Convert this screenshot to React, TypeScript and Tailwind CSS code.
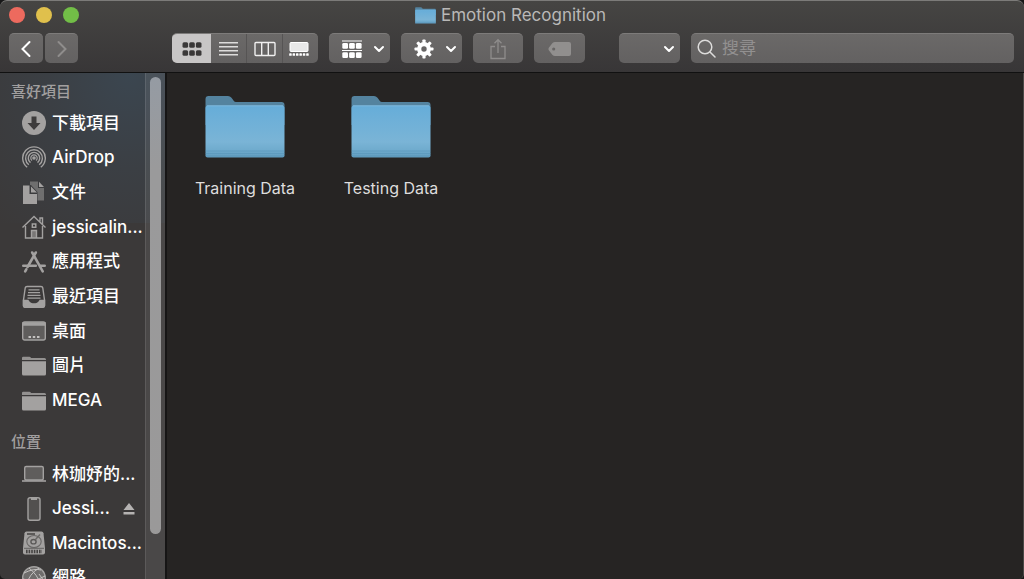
import type { ReactNode } from "react";

const BUTTON =
  "flex h-[30px] items-center rounded-[5px] border-t border-[#7d7b7a] bg-linear-to-b from-[#6b6968] to-[#636161] text-white";

function Chevron() {
  return (
    <svg width="12" height="8" viewBox="0 0 12 8" fill="none" stroke="currentColor" strokeWidth="2" strokeLinecap="round" strokeLinejoin="round">
      <path d="M2 2l4 4 4-4" />
    </svg>
  );
}

function GridIcon() {
  return (
    <svg width="20" height="16" viewBox="0 0 20 16" fill="currentColor">
      {[0.5, 7.2, 13.9].map((x) => (
        <g key={x}>
          <rect x={x} y="1.2" width="5.600" height="5.600" rx="1.500" />
          <rect x={x} y="9.2" width="5.600" height="5.600" rx="1.500" />
        </g>
      ))}
    </svg>
  );
}

function ListIcon() {
  return (
    <svg width="19" height="16" viewBox="0 0 19 16" stroke="currentColor" strokeWidth="1.4">
      <path d="M0 1.700h19M0 5.700h19M0 9.700h19M0 13.700h19" />
    </svg>
  );
}

function ColumnsIcon() {
  return (
    <svg width="22" height="16" viewBox="0 0 22 16" fill="none" stroke="currentColor" strokeWidth="1.4">
      <rect x="1" y="1.500" width="20" height="13" rx="1" />
      <path d="M7.700 2v12M14.300 2v12" />
    </svg>
  );
}

function GalleryIcon() {
  return (
    <svg width="20" height="16" viewBox="0 0 20 16" fill="currentColor">
      <rect x="1" y="1.500" width="18" height="9" rx="1" fillOpacity=".85" stroke="currentColor" strokeWidth="1" />
      {[0, 3.4, 6.8, 10.2, 13.6, 17].map((x) => (
        <rect key={x} x={x + 0.2} y="12.300" width="2.500" height="2.500" rx=".6" />
      ))}
    </svg>
  );
}

function ArrangeIcon() {
  return (
    <svg width="20" height="20" viewBox="0 0 20 20" fill="currentColor">
      <path d="M0 1.500h20v1H0zM0 11h20v1H0z" />
      {[0.3, 7.1, 13.9].map((x) => (
        <g key={x}>
          <rect x={x} y="4" width="5.700" height="5.700" rx="1.300" />
          <rect x={x} y="13.300" width="5.700" height="5.700" rx="1.300" />
        </g>
      ))}
    </svg>
  );
}

function GearIcon() {
  return (
    <svg width="20" height="20" viewBox="0 0 20 20">
      <circle cx="10" cy="10" r="4.800" fill="none" stroke="currentColor" strokeWidth="4.200" />
      {[0, 45, 90, 135, 180, 225, 270, 315].map((a) => (
        <rect key={a} x="8.400" y=".5" width="3.200" height="4" rx=".8" fill="currentColor" transform={`rotate(${a} 10 10)`} />
      ))}
    </svg>
  );
}

function ShareIcon() {
  return (
    <svg width="18" height="22" viewBox="0 0 18 22" fill="none" stroke="currentColor" strokeWidth="1.300">
      <path d="M6 8.500H2v12h14v-12h-4M9 15V2M5.500 5.200L9 1.700l3.500 3.500" />
    </svg>
  );
}

function TagIcon() {
  return (
    <svg width="24" height="16" viewBox="0 0 24 16" fill="currentColor" fillRule="evenodd">
      <path d="M7 1h14a2 2 0 0 1 2 2v10a2 2 0 0 1-2 2H7Q5.500 15 4.500 14L.8 9.300Q0 8 .8 6.700L4.500 2Q5.500 1 7 1zM5.700 6.400a1.600 1.600 0 1 0 0 3.200 1.600 1.600 0 0 0 0-3.200z" />
    </svg>
  );
}

function Folder({ className }: { className: string }) {
  return (
    <svg className={className} viewBox="0 0 80 64" preserveAspectRatio="none">
      <defs>
        <linearGradient id="front" x1="0" y1="0" x2="0" y2="1">
          <stop offset="0" stopColor="#66add9" />
          <stop offset=".7" stopColor="#7ab4d6" />
          <stop offset=".86" stopColor="#6fabcd" />
          <stop offset="1" stopColor="#629dbe" />
        </linearGradient>
      </defs>
      <path d="M.5 30V4q0-3 3-3h19.500q2 0 3.500 1.800l2.200 3Q29.500 7 31 7h45.500q3 0 3 3v20z" fill="#54839f" />
      <path d="M.5 13q0-2.500 2.500-2.500h74q2.500 0 2.500 2.500v47.500q0 2-2 2h-75q-2 0-2-2z" fill="url(#front)" />
      <path d="M2 10.800h76" stroke="#8cc3e4" strokeWidth=".7" />
      <path d="M.5 56h79M.5 58.500h79M.5 61h79" stroke="#4f8db2" strokeWidth=".7" strokeOpacity=".6" />
    </svg>
  );
}

function SideIcon({ children }: { children: ReactNode }) {
  return (
    <svg className="size-6 shrink-0 text-[#a3a1a0]" viewBox="0 0 24 24" fill="none" stroke="currentColor" strokeWidth="1.400">
      {children}
    </svg>
  );
}

const grayFolder = (
  <g fill="currentColor" stroke="none">
    <path d="M0 6V4q0-1.300 1.300-1.300h6Q8.500 2.700 9 4h13.500Q24 4 24 5.500V6z" opacity=".85" />
    <path d="M0 7.300h24V20q0 1.500-1.500 1.500h-21Q0 21.500 0 20z" />
  </g>
);

const favorites = [
  {
    name: "下載項目",
    icon: (
      <>
        <circle cx="12" cy="12" r="12" fill="currentColor" stroke="none" />
        <path d="M9.500 5.500h5V12h4L12 19l-6.500-7h4z" fill="#3e3c3c" stroke="none" />
      </>
    ),
  },
  {
    name: "AirDrop",
    icon: (
      <>
        <circle cx="12" cy="12" r="1.800" fill="currentColor" stroke="none" />
        <path d="M5.200 21.200a11.300 11.300 0 1 1 13.600 0" />
        <path d="M6.800 18.800a8.400 8.400 0 1 1 10.400 0" />
        <path d="M8.500 16.600a5.700 5.700 0 1 1 7 0" />
        <path d="M10 14.500a3.200 3.200 0 1 1 4 0" strokeWidth="1.200" />
      </>
    ),
  },
  {
    name: "文件",
    icon: (
      <g fill="currentColor" stroke="none">
        <path d="M8 .5h8V7h6v12.500h-6.500V11L9 4H8z" opacity=".5" />
        <path d="M17 .8L22 6h-5z" />
        <path d="M1 4.500h6.500V13H15v10H1z" />
        <path d="M9 5.500l6 6H9z" />
      </g>
    ),
  },
  {
    name: "jessicalin...",
    icon: (
      <>
        <path d="M.5 12.500L12 1.500l11.500 11M18 6.500V3h2.500v6" />
        <path d="M3.500 11v12h17V11M9.500 23v-7.500h5V23M10.300 9h3.500v3.200h-3.500z" />
        <path d="M10 16h4v7h-4z" fill="currentColor" stroke="none" opacity=".6" />
      </>
    ),
  },
  {
    name: "應用程式",
    icon: (
      <g strokeWidth="2.600" strokeLinecap="round">
        <path d="M13.800 2.500L5.500 17M4.300 19.300L3.200 21.300M10.200 2.500L20.700 21.300" />
        <path d="M1.300 15.800h12.500M18.500 15.800h4.200" />
      </g>
    ),
  },
  {
    name: "最近項目",
    icon: (
      <>
        <path d="M5 1.500h14q1.500 0 1.800 1.500L22.500 15v5.500q0 1.700-1.700 1.700H3.200q-1.700 0-1.700-1.700V15L3.200 3Q3.500 1.500 5 1.500z" />
        <path d="M1.500 15.500H6q1.500 3.500 6 3.500t6-3.500h4.500v5q0 1.700-1.700 1.700H3.200q-1.700 0-1.700-1.700z" fill="currentColor" />
        <path d="M6.500 4.800h11M6 7.600h12M5.500 10.400h13M5.500 13.200h13" strokeWidth="1.300" />
      </>
    ),
  },
  {
    name: "桌面",
    icon: (
      <>
        <rect x=".7" y="3" width="22.600" height="18" rx="2" fill="#5f5d5c" />
        <path d="M1 4h22v2H1z" fill="currentColor" />
        <path d="M6.500 18H9M10.800 18h2.400M15 18h2.500" stroke="#c4c2c1" strokeWidth="2" />
      </>
    ),
  },
  { name: "圖片", icon: grayFolder },
  { name: "MEGA", icon: grayFolder },
];

const locations = [
  {
    name: "林珈妤的...",
    icon: (
      <>
        <rect x="2.700" y="4.500" width="18.600" height="13.500" rx="1.500" fill="#5f5d5c" />
        <path d="M0 19h24" strokeWidth="1.600" />
      </>
    ),
  },
  {
    name: "Jessi...",
    ejectable: true,
    icon: (
      <>
        <rect x="6" y=".7" width="12" height="22.600" rx="2" fill="#52504f" />
        <path d="M9 2h6" strokeWidth="2" />
      </>
    ),
  },
  {
    name: "Macintos...",
    icon: (
      <>
        <path d="M4.500.5h15q1.800 0 2 1.800L23 17v4.500q0 2-2 2H3q-2 0-2-2V17L2.500 2.300Q2.700.5 4.500.5z" fill="currentColor" stroke="none" />
        <ellipse cx="12" cy="10.500" rx="7.200" ry="6" stroke="#6a6867" strokeWidth="1.100" />
        <path d="M5 3h8" stroke="#454342" strokeWidth="1.600" />
        <path d="M13.500 8.500L18 3.500" stroke="#6a6867" />
        <ellipse cx="11.500" cy="10.700" rx="2.600" ry="2.200" stroke="#5b5958" />
        <path d="M2 17.300h20" stroke="#555352" strokeWidth=".8" />
        <path d="M4 20.500h16" stroke="#454342" strokeWidth="3.400" strokeDasharray="1.600 1" />
      </>
    ),
  },
  {
    name: "網路",
    icon: (
      <>
        <circle cx="12" cy="12" r="11.300" fill="#6f6d6c" />
        <path d="M2 7q10-5 17-3M7 2q8 6 12 17M17 2Q7 8 4.500 19M1 13q10 4 22-3M17 8l5 7" strokeWidth="1" stroke="#c4c2c1" />
      </>
    ),
  },
];

type Place = { name: string; icon: ReactNode; ejectable?: boolean };

function PlaceRow({ place }: { place: Place }) {
  return (
    <li className="flex items-center">
      <a href="#" className="flex min-w-0 flex-1 items-center gap-[6px] whitespace-nowrap text-white">
        <SideIcon>{place.icon}</SideIcon>
        {place.name}
      </a>
      {place.ejectable && (
        <button aria-label="退出" className="mr-[10px] text-[#b5b3b2]">
          <svg width="12" height="12" viewBox="0 0 12 12" fill="currentColor">
            <path d="M6 0l5.500 7H.5zM.5 9h11v2.500H.5z" />
          </svg>
        </button>
      )}
    </li>
  );
}

function TitleBar() {
  return (
    <header className="shrink-0 rounded-t-[7px] border-t border-b border-t-[#7c7b79] border-b-[#111] bg-linear-to-b from-[#464543] to-[#383637] pb-[9px]">
      <div className="grid h-8 grid-cols-[1fr_auto_1fr] items-center pr-3 pb-1 pl-[9px]">
        <div className="flex gap-[11px]">
          <button aria-label="關閉" className="size-4 rounded-full bg-[#ed6a5e]" />
          <button aria-label="縮到最小" className="size-4 rounded-full bg-[#e0c04c]" />
          <button aria-label="放大" className="size-4 rounded-full bg-[#72be47]" />
        </div>
        <h1 className="flex items-center gap-[5px] text-[17px] leading-6 text-[#b9b8b7]">
          <Folder className="h-[17px] w-[21px]" />
          Emotion Recognition
        </h1>
      </div>
      <div className="flex gap-[11px] pr-[10px] pl-[9px]">
        <div className="mr-[83px] flex gap-[2px]">
          <button aria-label="上一頁" className={`${BUTTON} w-[34px] justify-center`}>
            <svg width="12" height="18" viewBox="0 0 12 18" fill="none" stroke="currentColor" strokeWidth="2" strokeLinecap="round">
              <path d="M9.500 2L2.500 9l7 7" />
            </svg>
          </button>
          <button aria-label="下一頁" className={`${BUTTON} w-[33px] justify-center`}>
            <svg width="12" height="18" viewBox="0 0 12 18" fill="none" stroke="#8f8d8c" strokeWidth="2" strokeLinecap="round">
              <path d="M2.500 2l7 7-7 7" />
            </svg>
          </button>
        </div>
        <div className={`${BUTTON} overflow-hidden`}>
          <button aria-label="圖像" className="flex h-full w-[39px] items-center justify-center bg-[#c8c6c6] text-[#3a3838]">
            <GridIcon />
          </button>
          <button aria-label="列表" className="flex h-full w-[35px] items-center justify-center text-[#dddcdb]">
            <ListIcon />
          </button>
          <button aria-label="直欄" className="flex h-full w-9 items-center justify-center border-l border-[#565454] text-[#f0efef]">
            <ColumnsIcon />
          </button>
          <button aria-label="圖庫" className="flex h-full w-9 items-center justify-center border-l border-[#565454] pr-[3px]">
            <GalleryIcon />
          </button>
        </div>
        <button aria-label="排列方式" className={`${BUTTON} w-[61px] justify-between pr-[5px] pl-[13px]`}>
          <ArrangeIcon />
          <Chevron />
        </button>
        <button aria-label="動作" className={`${BUTTON} w-[61px] justify-between pr-[5px] pl-[13px]`}>
          <GearIcon />
          <Chevron />
        </button>
        <button aria-label="分享" disabled className={`${BUTTON} w-[50px] justify-center`}>
          <span className="text-[#8f8d8c]">
            <ShareIcon />
          </span>
        </button>
        <button aria-label="標籤" disabled className={`${BUTTON} w-[51px] justify-center`}>
          <span className="text-[#918f8e]">
            <TagIcon />
          </span>
        </button>
        <div className={`${BUTTON} relative ml-[23px] w-[61px]`}>
          <select aria-label="選項" className="h-full w-full appearance-none bg-transparent outline-none">
            <option></option>
          </select>
          <span className="pointer-events-none absolute right-[5px]">
            <Chevron />
          </span>
        </div>
        <label className={`${BUTTON} min-w-0 flex-1 gap-[6px] pl-[6px]`}>
          <svg width="19" height="19" viewBox="0 0 19 19" fill="none" stroke="#dddcdb" strokeWidth="1.500" strokeLinecap="round">
            <circle cx="8" cy="8" r="6.800" />
            <path d="M13 13l5 5" />
          </svg>
          <input type="search" aria-label="搜尋" placeholder="搜尋" className="min-w-0 flex-1 bg-transparent text-[17px] outline-none placeholder:text-[#929090]" />
        </label>
      </div>
    </header>
  );
}

function Sidebar() {
  return (
    <aside className="flex w-[167px] shrink-0 overflow-hidden rounded-bl-[5px] border-r-2 border-[#161515] bg-[#3b3939] bg-[radial-gradient(ellipse_at_130px_0px,#3b4650_0%,#3b3f44_45%,#3b3939_100%)] bg-[length:100%_150px] bg-no-repeat">
      <nav className="min-w-0 flex-1 text-[17px] font-medium">
        <h2 className="mt-[7px] mb-[2px] ml-[11px] text-[15px] leading-6 text-[#a19f9f]">喜好項目</h2>
        <ul className="ml-[22px] grid h-[312px] auto-rows-fr">
          {favorites.map((place) => (
            <PlaceRow key={place.name} place={place} />
          ))}
        </ul>
        <h2 className="mt-3 mb-[3px] ml-[11px] text-[15px] leading-6 text-[#a19f9f]">位置</h2>
        <ul className="ml-[22px] grid h-[138px] auto-rows-fr">
          {locations.map((place) => (
            <PlaceRow key={place.name} place={place} />
          ))}
        </ul>
      </nav>
      <div className="flex w-5 shrink-0 justify-center border-l border-white/10 bg-white/8 pt-1">
        <div className="h-[91%] w-[11px] rounded-full bg-linear-to-b from-[#959ba3] via-[#9a9a9b] via-20% to-[#9a9999]" />
      </div>
    </aside>
  );
}

export default function App() {
  return (
    <div className="flex h-screen flex-col overflow-hidden bg-[#171717] font-['Inter','Noto_Sans_CJK_TC',sans-serif]">
      <TitleBar />
      <div className="flex min-h-0 flex-1">
        <Sidebar />
        <main className="flex flex-1 flex-wrap content-start rounded-br-[5px] border-r border-[#4a4947] bg-[#262423] pt-[22px] pl-[5px]">
          {["Training Data", "Testing Data"].map((name) => (
            <a key={name} href="#" className="flex w-[146px] flex-col items-center gap-[17px] text-[16px] leading-6 text-[#dedddd]">
              <Folder className="h-16 w-20" />
              {name}
            </a>
          ))}
        </main>
      </div>
    </div>
  );
}
